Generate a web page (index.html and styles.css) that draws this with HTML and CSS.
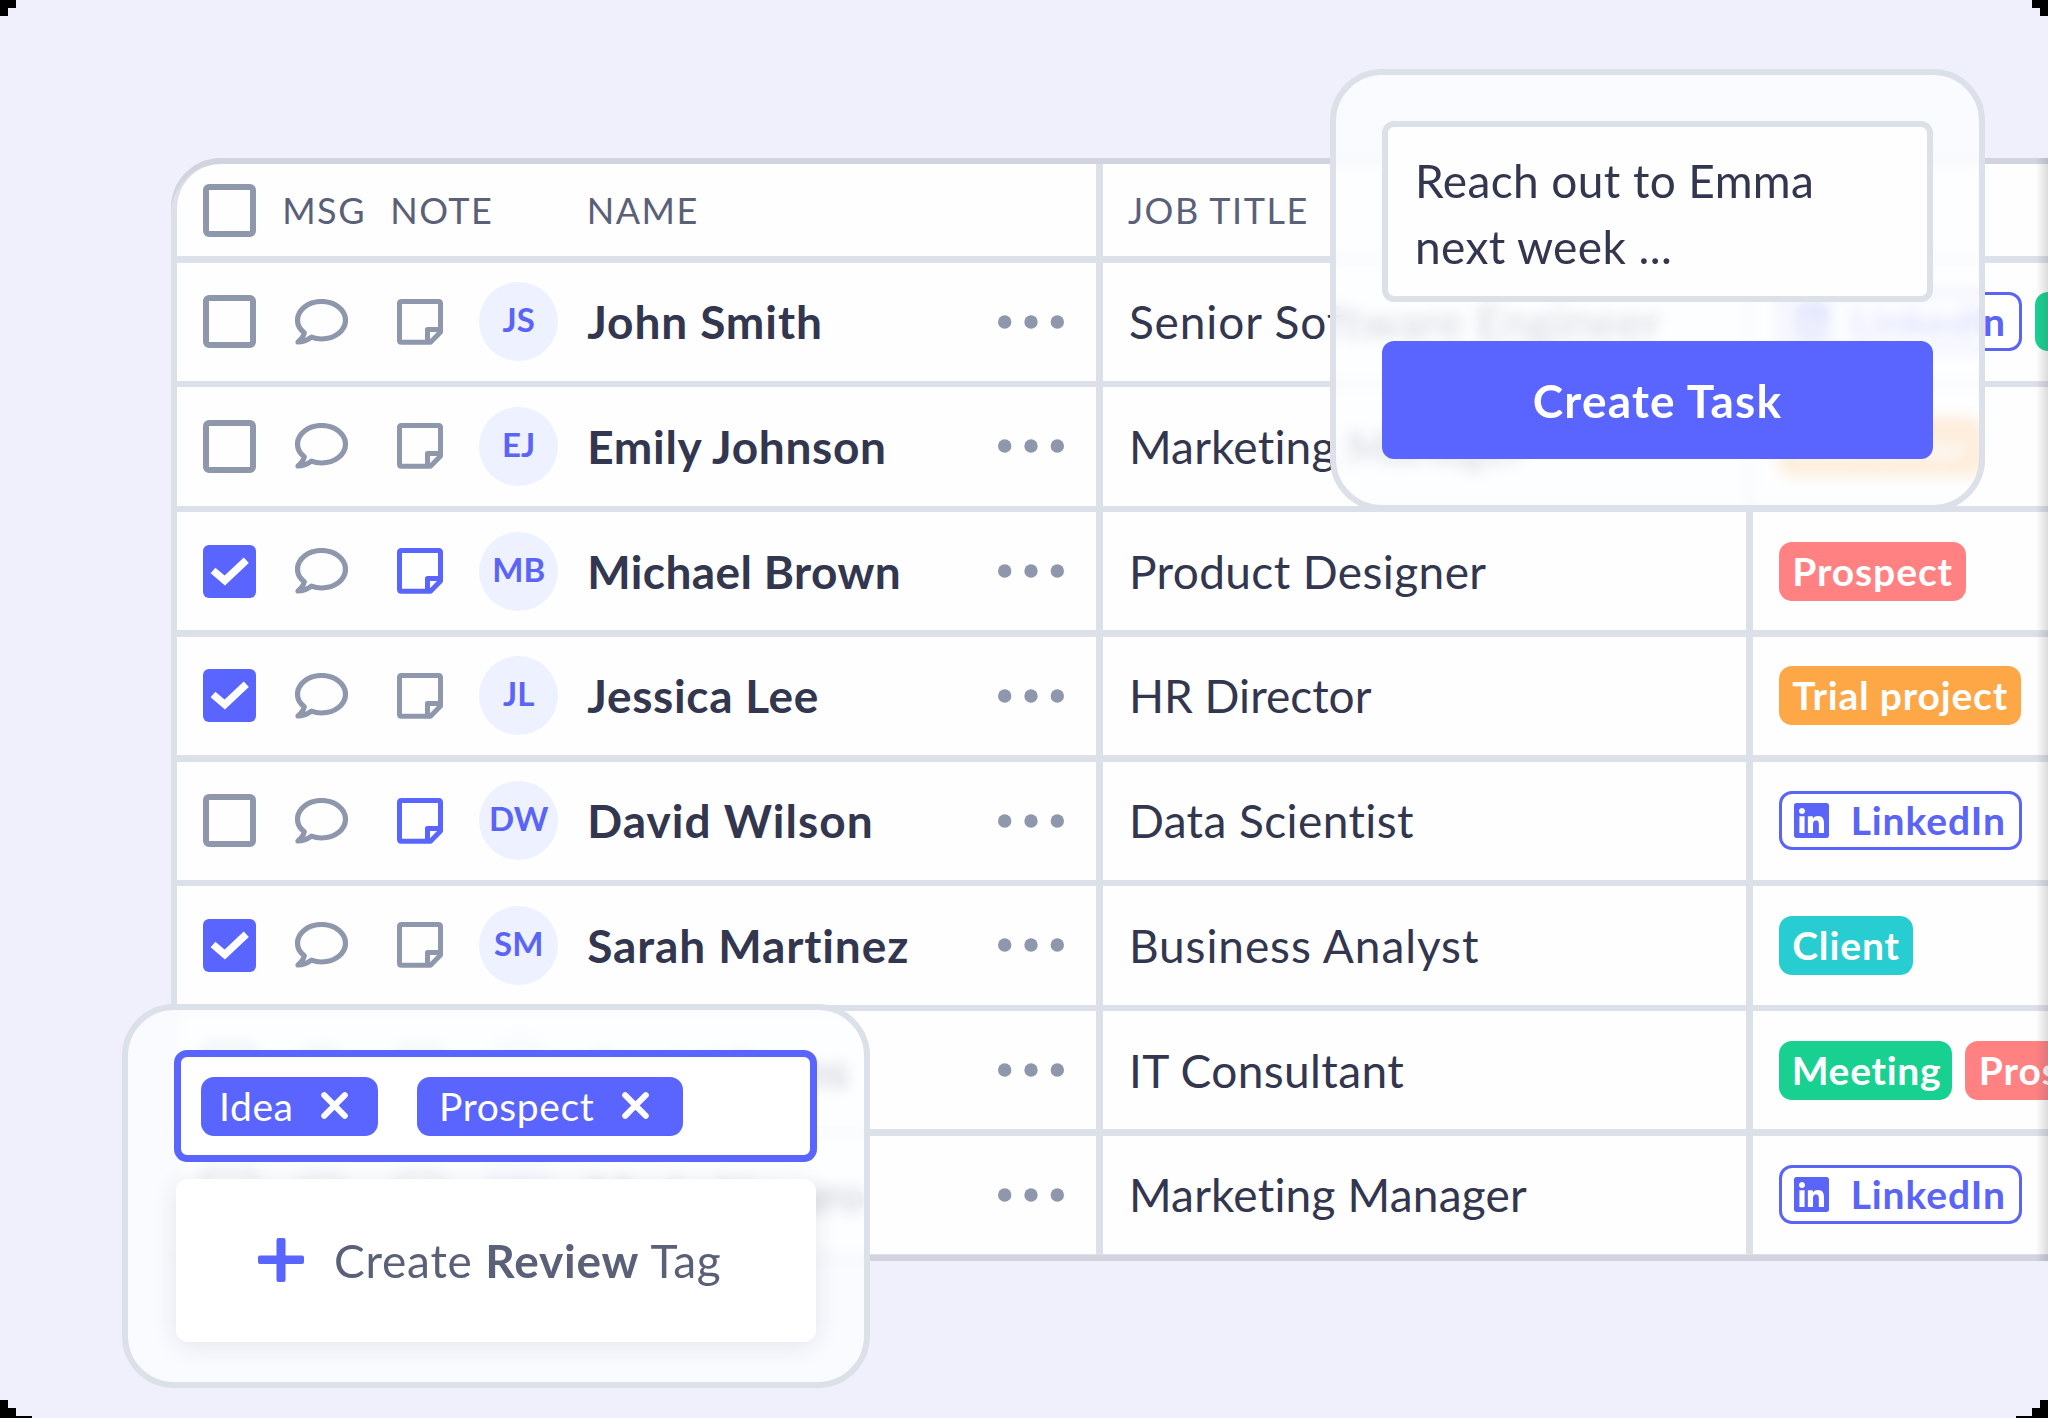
FILE: index.html
```html
<!DOCTYPE html>
<html lang="en">
<head>
<meta charset="utf-8">
<title>Contacts</title>
<link rel="stylesheet" href="styles.css">
</head>
<body>
<svg class="sprite" aria-hidden="true">
  <symbol id="comment" viewBox="0 0 53 46"><path d="M16.5 38.2C12.5 41 8 43 3 43C6 40.5 8.5 37.5 9.3 33.8C5 30.5 2.5 26 2.5 21.3C2.5 10.9 13.2 2.5 26.5 2.5S50.5 10.9 50.5 21.3S39.8 40 26.5 40C23 40 19.5 39.4 16.5 38.2Z" fill="none" stroke="currentColor" stroke-width="5.2" stroke-linejoin="round"/></symbol>
  <symbol id="note" viewBox="0 0 46 46"><path d="M4.5 2.5H41.5Q43.5 2.5 43.5 4.5V33L33.5 43.2H4.5Q2.5 43.2 2.5 41.2V4.5Q2.5 2.5 4.5 2.5ZM43 30.5H30.5V43" fill="none" stroke="currentColor" stroke-width="5" stroke-linejoin="round"/></symbol>
  <symbol id="check" viewBox="0 0 53 53"><path d="M10 25.500L21.8 35.5L43.300 15.300" fill="none" stroke="#fff" stroke-width="7.400"/></symbol>
  <symbol id="dots" viewBox="0 0 66 14"><g fill="currentColor"><circle cx="6.7" cy="7" r="6.7"/><circle cx="33" cy="7" r="6.7"/><circle cx="59.3" cy="7" r="6.7"/></g></symbol>
  <symbol id="linkedin" viewBox="0 32 448 448"><path fill="currentColor" d="M416 32H31.9C14.3 32 0 46.5 0 64.3v383.4C0 465.5 14.3 480 31.9 480H416c17.6 0 32-14.5 32-32.3V64.3c0-17.8-14.4-32.3-32-32.3zM135.4 416H69V202.2h66.5V416zm-33.2-243c-21.3 0-38.5-17.3-38.5-38.5S80.9 96 102.2 96c21.2 0 38.5 17.3 38.5 38.5 0 21.3-17.2 38.5-38.5 38.5zm282.1 243h-66.4V312c0-24.8-.5-56.7-34.5-56.7-34.6 0-39.9 27-39.9 54.9V416h-66.4V202.2h63.7v29.2h.9c8.9-16.8 30.6-34.5 62.9-34.5 67.2 0 79.7 44.3 79.7 101.9V416z"/></symbol>
  <symbol id="close" viewBox="0 0 27 27"><path d="M3.2 3.2L23.8 23.8M23.8 3.2L3.2 23.8" stroke="currentColor" stroke-width="6"  stroke-linecap="round"/></symbol>
  <symbol id="plus" viewBox="0 0 46 44"><path d="M18.5 2Q18.5 0 20.5 0H25.5Q27.5 0 27.5 2V17.5H44Q46 17.5 46 19.5V24Q46 26 44 26H27.5V42Q27.5 44 25.5 44H20.5Q18.5 44 18.5 42V26H2Q0 26 0 24V19.5Q0 17.5 2 17.5H18.5Z" fill="currentColor"/></symbol>
</svg>

<main class="stage">
  <section class="table">
    <div class="cell head head-name"><i class="box"></i><span class="h-msg">MSG</span><span class="h-note">NOTE</span><span>NAME</span></div>
    <div class="cell head head-job">JOB TITLE</div>
    <div class="cell head"></div>

    <div class="cell who"><i class="box"></i><svg class="msg"><use href="#comment"/></svg><svg class="note"><use href="#note"/></svg><span class="avatar">JS</span><b class="name t9">John Smith</b><svg class="dots"><use href="#dots"/></svg></div>
    <div class="cell job t9">Senior Software Engineer</div>
    <div class="cell tags"><span class="tag outline"><svg><use href="#linkedin"/></svg>LinkedIn</span><span class="tag green">Meeting</span></div>

    <div class="cell who"><i class="box"></i><svg class="msg"><use href="#comment"/></svg><svg class="note"><use href="#note"/></svg><span class="avatar">EJ</span><b class="name t7">Emily Johnson</b><svg class="dots"><use href="#dots"/></svg></div>
    <div class="cell job t2">Marketing Manager</div>
    <div class="cell tags"><span class="tag orange">Customer</span></div>

    <div class="cell who"><i class="box on"><svg><use href="#check"/></svg></i><svg class="msg"><use href="#comment"/></svg><svg class="note has"><use href="#note"/></svg><span class="avatar">MB</span><b class="name t4">Michael Brown</b><svg class="dots"><use href="#dots"/></svg></div>
    <div class="cell job t4">Product Designer</div>
    <div class="cell tags"><span class="tag red">Prospect</span></div>

    <div class="cell who"><i class="box on"><svg><use href="#check"/></svg></i><svg class="msg"><use href="#comment"/></svg><svg class="note"><use href="#note"/></svg><span class="avatar">JL</span><b class="name t7">Jessica Lee</b><svg class="dots"><use href="#dots"/></svg></div>
    <div class="cell job">HR Director</div>
    <div class="cell tags"><span class="tag orange trial">Trial project</span></div>

    <div class="cell who"><i class="box"></i><svg class="msg"><use href="#comment"/></svg><svg class="note has"><use href="#note"/></svg><span class="avatar">DW</span><b class="name t10">David Wilson</b><svg class="dots"><use href="#dots"/></svg></div>
    <div class="cell job t4">Data Scientist</div>
    <div class="cell tags"><span class="tag outline"><svg><use href="#linkedin"/></svg>LinkedIn</span></div>

    <div class="cell who"><i class="box on"><svg><use href="#check"/></svg></i><svg class="msg"><use href="#comment"/></svg><svg class="note"><use href="#note"/></svg><span class="avatar">SM</span><b class="name t9">Sarah Martinez</b><svg class="dots"><use href="#dots"/></svg></div>
    <div class="cell job t9">Business Analyst</div>
    <div class="cell tags"><span class="tag teal">Client</span></div>

    <div class="cell who"><i class="box"></i><svg class="msg"><use href="#comment"/></svg><svg class="note"><use href="#note"/></svg><span class="avatar">DE</span><b class="name">Daniel Evans</b><svg class="dots"><use href="#dots"/></svg></div>
    <div class="cell job t4">IT Consultant</div>
    <div class="cell tags"><span class="tag green">Meeting</span><span class="tag red">Prospect</span></div>

    <div class="cell who"><i class="box"></i><svg class="msg"><use href="#comment"/></svg><svg class="note"><use href="#note"/></svg><span class="avatar">MN</span><b class="name">Maria Navaro</b><svg class="dots"><use href="#dots"/></svg></div>
    <div class="cell job t2">Marketing Manager</div>
    <div class="cell tags"><span class="tag outline"><svg><use href="#linkedin"/></svg>LinkedIn</span></div>

    <div class="edge"></div>
  </section>

  <aside class="popup task">
    <div class="field">Reach out to Emma<br>next week ...</div>
    <button class="create">Create Task</button>
  </aside>

  <aside class="popup tagger">
    <div class="input">
      <span class="pick idea">Idea<svg><use href="#close"/></svg></span>
      <span class="pick prospect">Prospect<svg><use href="#close"/></svg></span>
    </div>
    <div class="drop"><svg><use href="#plus"/></svg><span>Create <b>Review</b> Tag</span></div>
  </aside>
</main>
</body>
</html>
```
FILE: styles.css
```css
* { box-sizing: border-box; }

html { background: #000; }

body {
  margin: 0;
  font-family: Lato, "Open Sans", sans-serif;
  font-variant-ligatures: none;
  color: #33364f;
}

svg { display: block; flex: none; }
.sprite { position: absolute; width: 0; height: 0; }

/* Canvas with stepped corners */
.stage {
  position: relative;
  width: 2048px;
  height: 1418px;
  padding: 158px 0 0 171px;
  overflow: hidden;
  background: #f0f0fd;
  clip-path: polygon(16px 0, 2032px 0, 2032px 8px, 2040px 8px, 2040px 16px, 2048px 16px,
    2048px 1400px, 2040px 1400px, 2040px 1408px, 2032px 1408px, 2032px 1416px, 2016px 1416px, 2016px 1418px,
    32px 1418px, 32px 1416px, 16px 1416px, 16px 1408px, 8px 1408px, 8px 1400px, 0 1400px,
    0 16px, 8px 16px, 8px 8px, 16px 8px);
}

/* Table */
.table {
  position: relative;
  display: grid;
  grid-template-columns: 919.3px 643.4px 1fr;
  grid-template-rows: 92px repeat(8, 118.35px);
  gap: 6.4px;
  height: 1102.6px;
  padding: 6.2px 0 6.4px 6.2px;
  overflow: hidden;
  background: #dce0e8;
  border-radius: 50px 0 0 0;
  box-shadow: inset 0 6px #d1d4df, inset 0 -6px #d1d4de;
}

.cell {
  display: flex;
  align-items: center;
  min-width: 0;
  background: #fefefe;
  white-space: nowrap;
}
.cell:first-child { border-radius: 44px 0 0 0; }

.head { font-size: 36px; letter-spacing: 1.5px; color: #5b6079; }
.head-name { padding-left: 26px; }
.head-name .box { margin-right: 26px; }
.h-msg { width: 108px; }
.h-note { width: 196.5px; }
.head-job { padding-left: 25px; }

.who { padding: 0 32px 0 26px; }
.job { padding-left: 26px; font-size: 46px; }
.tags { gap: 13px; padding-left: 26px; overflow: hidden; }

.box {
  flex: none;
  width: 53px;
  height: 53px;
  border: 6px solid #8f97ad;
  border-radius: 6px;
}
.box.on { border: 0; background: #5a64ff; }
.box svg { width: 53px; height: 53px; }

.msg { width: 53px; height: 46px; margin-left: 39px; color: #8f97ad; }
.note { width: 46px; height: 46px; margin-left: 49px; color: #8f97ad; }
.note.has { color: #5a64ff; }

.avatar {
  flex: none;
  width: 79px;
  height: 79px;
  margin: 0 29px 0 36px;
  border-radius: 50%;
  background: #eef1ff;
  color: #5a64f6;
  font-size: 33px;
  font-weight: 700;
  line-height: 75px;
  text-align: center;
}
.name { font-size: 46px; }
.dots { width: 66px; height: 14px; margin-left: auto; color: #8f97ad; }

/* Letter tracking steps, in tenths of a pixel */
.t2 { letter-spacing: .2px; }
.t4 { letter-spacing: .4px; }
.t7 { letter-spacing: .7px; }
.t9 { letter-spacing: .9px; }
.t10 { letter-spacing: 1.05px; }

.tag {
  display: flex;
  align-items: center;
  height: 59px;
  padding: 0 12.5px 1px 13.5px;
  border-radius: 13px;
  color: #fff;
  font-size: 39px;
  font-weight: 700;
  letter-spacing: .9px;
}
.trial { letter-spacing: .8px; }
.red { background: #ff8182; }
.orange { background: #fda747; }
.teal { background: #28cdd1; }
.green { background: #18d191; padding: 0 11px 1px 13px; letter-spacing: .7px; }
.outline { border: 3px solid #5a64f6; color: #5a64f6; padding: 0 13px 1px 12px; background: #fff; }
.outline svg { width: 35px; height: 35px; margin: 1px 22px 0 0; }

.edge {
  position: absolute;
  top: 0;
  right: 0;
  bottom: 0;
  width: 12px;
  background: linear-gradient(to right, rgba(80, 80, 90, 0), rgba(80, 80, 90, .2));
}

/* Floating panels */
.popup {
  position: absolute;
  border: 6px solid #dce0e8;
  border-radius: 52px;
  background: rgba(252, 254, 255, .8);
  background-clip: padding-box;
  backdrop-filter: blur(7px);
}

.task {
  left: 1330px;
  top: 69px;
  width: 655px;
  height: 442px;
  padding: 46px;
}
.field {
  height: 181px;
  padding: 21px 27px;
  border: 6px solid #dce0e7;
  border-radius: 12px;
  background: #fefefe;
  font-size: 46px;
  letter-spacing: .4px;
  line-height: 66px;
}
.create {
  display: block;
  width: 100%;
  height: 118px;
  margin-top: 39px;
  border: 0;
  border-radius: 12px;
  background: #5a64ff;
  color: #fff;
  font: 700 46px Lato, sans-serif;
  letter-spacing: 1.2px;
}

.tagger {
  left: 122px;
  top: 1004px;
  width: 748px;
  height: 384px;
  padding: 40px 47px 40px 46px;
}
.input {
  display: flex;
  align-items: center;
  gap: 39px;
  height: 112px;
  padding: 0 20px;
  border: 7px solid #5a64ff;
  border-radius: 13px;
  background: #fff;
}
.pick {
  display: flex;
  align-items: center;
  justify-content: space-between;
  height: 59px;
  padding-bottom: 1px;
  border-radius: 13px;
  background: #5a64ff;
  color: #fff;
  font-size: 39px;
  letter-spacing: .6px;
}
.pick svg { width: 27px; height: 27px; }
.idea { width: 177px; padding-left: 18px; padding-right: 30px; }
.prospect { width: 266px; padding-left: 22px; padding-right: 34px; }

.drop {
  display: flex;
  align-items: center;
  height: 163px;
  margin: 16.5px 1px 0 2px;
  padding: 0 0 0 82px;
  border-radius: 12px;
  background: #fff;
  box-shadow: 0 4px 26px rgba(40, 40, 60, .1);
  color: #5b6079;
  font-size: 46px;
  letter-spacing: .8px;
}
.drop svg { width: 46px; height: 44px; margin-right: 30px; color: #5a64ff; }
```
